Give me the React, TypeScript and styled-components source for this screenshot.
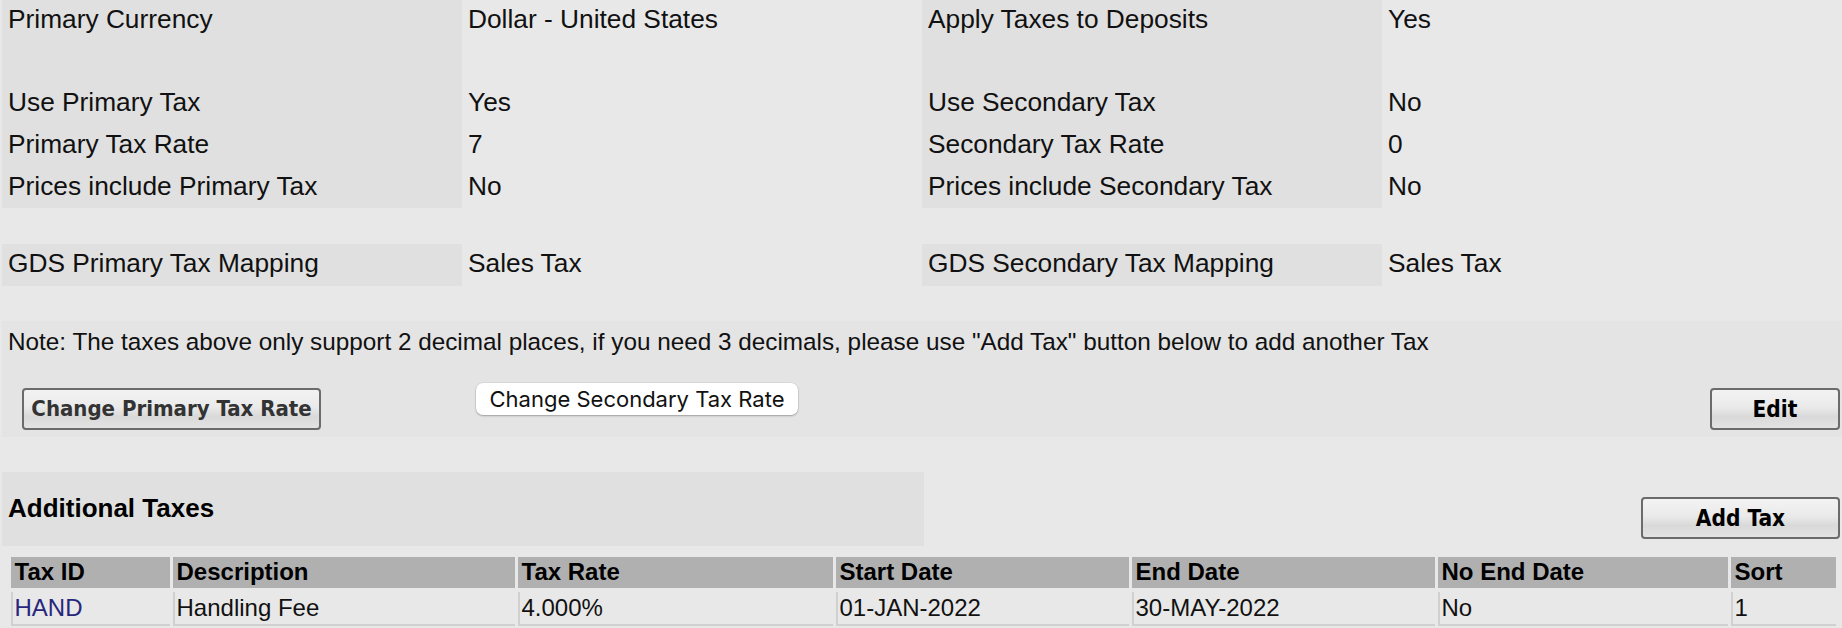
import styled, { createGlobalStyle } from 'styled-components';

const GlobalStyle = createGlobalStyle`
  body {
    margin: 0;
    background: #e8e8e8;
    font-family: "Liberation Sans", Arial, Helvetica, sans-serif;
    color: #111;
  }
`;

const Page = styled.div`
  width: 1842px;
  padding-left: 2px;
  box-sizing: border-box;
`;

const InfoGrid = styled.div<{ $gap?: number }>`
  display: grid;
  grid-template-columns: repeat(4, 1fr);
  grid-auto-rows: 41.6px;
  margin-top: ${({ $gap }) => $gap ?? 0}px;
`;

const Cell = styled.div<{ $label?: boolean }>`
  display: flex;
  align-items: center;
  padding: 0 0 2px 6px;
  font-size: 26.3px;
  background: ${({ $label }) => ($label ? '#e0e0e0' : 'transparent')};
`;

const NoteSection = styled.div`
  margin-top: 35px;
  background: #e4e4e4;
  height: 116px;
`;

const NoteText = styled.div`
  height: 42px;
  display: flex;
  align-items: center;
  padding-left: 6px;
  font-size: 24.3px;
`;

const ButtonRow = styled.div`
  display: grid;
  grid-template-columns: repeat(4, 1fr);
  align-items: start;
`;

const LegacyButton = styled.button<{ $muted?: boolean; $width: number }>`
  width: ${({ $width }) => $width}px;
  height: 42px;
  border: 2px solid #6b6b6b;
  border-radius: 4px;
  background: linear-gradient(#f3f3f3 0%, #eaeaea 45%, #d9d9d9 70%, #e3e3e3 100%);
  font-family: "DejaVu Sans Condensed", "DejaVu Sans", Tahoma, sans-serif;
  font-stretch: condensed;
  font-weight: bold;
  font-size: ${({ $muted }) => ($muted ? 22 : 22.5)}px;
  color: ${({ $muted }) => ($muted ? '#333' : '#000')};
  padding: 0;
  cursor: pointer;
`;

const PrimarySlot = styled.div`
  padding: 25px 0 0 20px;
`;

const SecondarySlot = styled.div`
  padding: 20px 0 0 14px;
`;

const EndSlot = styled.div<{ $top: number }>`
  display: flex;
  justify-content: flex-end;
  padding: ${({ $top }) => $top}px 2px 0 0;
`;

const PillButton = styled.button`
  width: 322px;
  height: 32px;
  border: none;
  border-radius: 7px;
  background: #fff;
  box-shadow: 0 1px 2px rgba(0, 0, 0, 0.28), 0 0 0 0.5px rgba(0, 0, 0, 0.08);
  font-family: Inter, "Liberation Sans", sans-serif;
  font-size: 22px;
  color: #111;
  padding: 0;
`;

const SectionRow = styled.div`
  margin-top: 35px;
  display: grid;
  grid-template-columns: 922px 1fr;
`;

const SectionTitle = styled.h2`
  margin: 0;
  height: 74px;
  display: flex;
  align-items: center;
  padding-left: 6px;
  background: #e0e0e0;
  font-size: 26px;
  font-weight: bold;
  color: #000;
`;

const TaxTable = styled.div`
  margin: 11px 6px 0 8.5px;
  display: grid;
  grid-template-columns: 159px 342px 315px 293px 303px 290px 1fr;
  grid-template-rows: 31px 34px;
  column-gap: 3px;
  row-gap: 4px;
`;

const HeadCell = styled.div`
  background: #b0b0b0;
  display: flex;
  align-items: center;
  padding-left: 4px;
  font-size: 24px;
  font-weight: bold;
  color: #000;
`;

const DataCell = styled.div`
  display: flex;
  align-items: center;
  padding-left: 2px;
  border-left: 2px solid #d0d0d0;
  border-bottom: 2px solid #d0d0d0;
  font-size: 24px;
  color: #111;
`;

const TaxLink = styled.a`
  color: #27277c;
  text-decoration: none;
`;

const infoRows: [string, string, string, string][] = [
  ['Primary Currency', 'Dollar - United States', 'Apply Taxes to Deposits', 'Yes'],
  ['', '', '', ''],
  ['Use Primary Tax', 'Yes', 'Use Secondary Tax', 'No'],
  ['Primary Tax Rate', '7', 'Secondary Tax Rate', '0'],
  ['Prices include Primary Tax', 'No', 'Prices include Secondary Tax', 'No'],
];

const columns = ['Tax ID', 'Description', 'Tax Rate', 'Start Date', 'End Date', 'No End Date', 'Sort'];
const taxes = [
  { id: 'HAND', description: 'Handling Fee', rate: '4.000%', start: '01-JAN-2022', end: '30-MAY-2022', noEnd: 'No', sort: '1' },
];

export default function App() {
  return (
    <>
      <GlobalStyle />
      <Page>
        <InfoGrid>
          {infoRows.map((r, i) => [
            <Cell key={`a${i}`} $label>{r[0]}</Cell>,
            <Cell key={`b${i}`}>{r[1]}</Cell>,
            <Cell key={`c${i}`} $label>{r[2]}</Cell>,
            <Cell key={`d${i}`}>{r[3]}</Cell>,
          ])}
        </InfoGrid>

        <InfoGrid $gap={36}>
          <Cell $label>GDS Primary Tax Mapping</Cell>
          <Cell>Sales Tax</Cell>
          <Cell $label>GDS Secondary Tax Mapping</Cell>
          <Cell>Sales Tax</Cell>
        </InfoGrid>

        <NoteSection>
          <NoteText>
            Note: The taxes above only support 2 decimal places, if you need 3 decimals, please use "Add Tax" button below to add another Tax
          </NoteText>
          <ButtonRow>
            <PrimarySlot>
              <LegacyButton type="button" $muted $width={299}>Change Primary Tax Rate</LegacyButton>
            </PrimarySlot>
            <SecondarySlot>
              <PillButton type="button">Change Secondary Tax Rate</PillButton>
            </SecondarySlot>
            <div />
            <EndSlot $top={25}>
              <LegacyButton type="button" $width={130}>Edit</LegacyButton>
            </EndSlot>
          </ButtonRow>
        </NoteSection>

        <SectionRow>
          <SectionTitle>Additional Taxes</SectionTitle>
          <EndSlot $top={25}>
            <LegacyButton type="button" $width={199}>Add Tax</LegacyButton>
          </EndSlot>
        </SectionRow>

        <TaxTable>
          {columns.map((c) => (
            <HeadCell key={c}>{c}</HeadCell>
          ))}
          {taxes.map((t) => [
            <DataCell key="id"><TaxLink href="#">{t.id}</TaxLink></DataCell>,
            <DataCell key="desc">{t.description}</DataCell>,
            <DataCell key="rate">{t.rate}</DataCell>,
            <DataCell key="start">{t.start}</DataCell>,
            <DataCell key="end">{t.end}</DataCell>,
            <DataCell key="noend">{t.noEnd}</DataCell>,
            <DataCell key="sort">{t.sort}</DataCell>,
          ])}
        </TaxTable>
      </Page>
    </>
  );
}
